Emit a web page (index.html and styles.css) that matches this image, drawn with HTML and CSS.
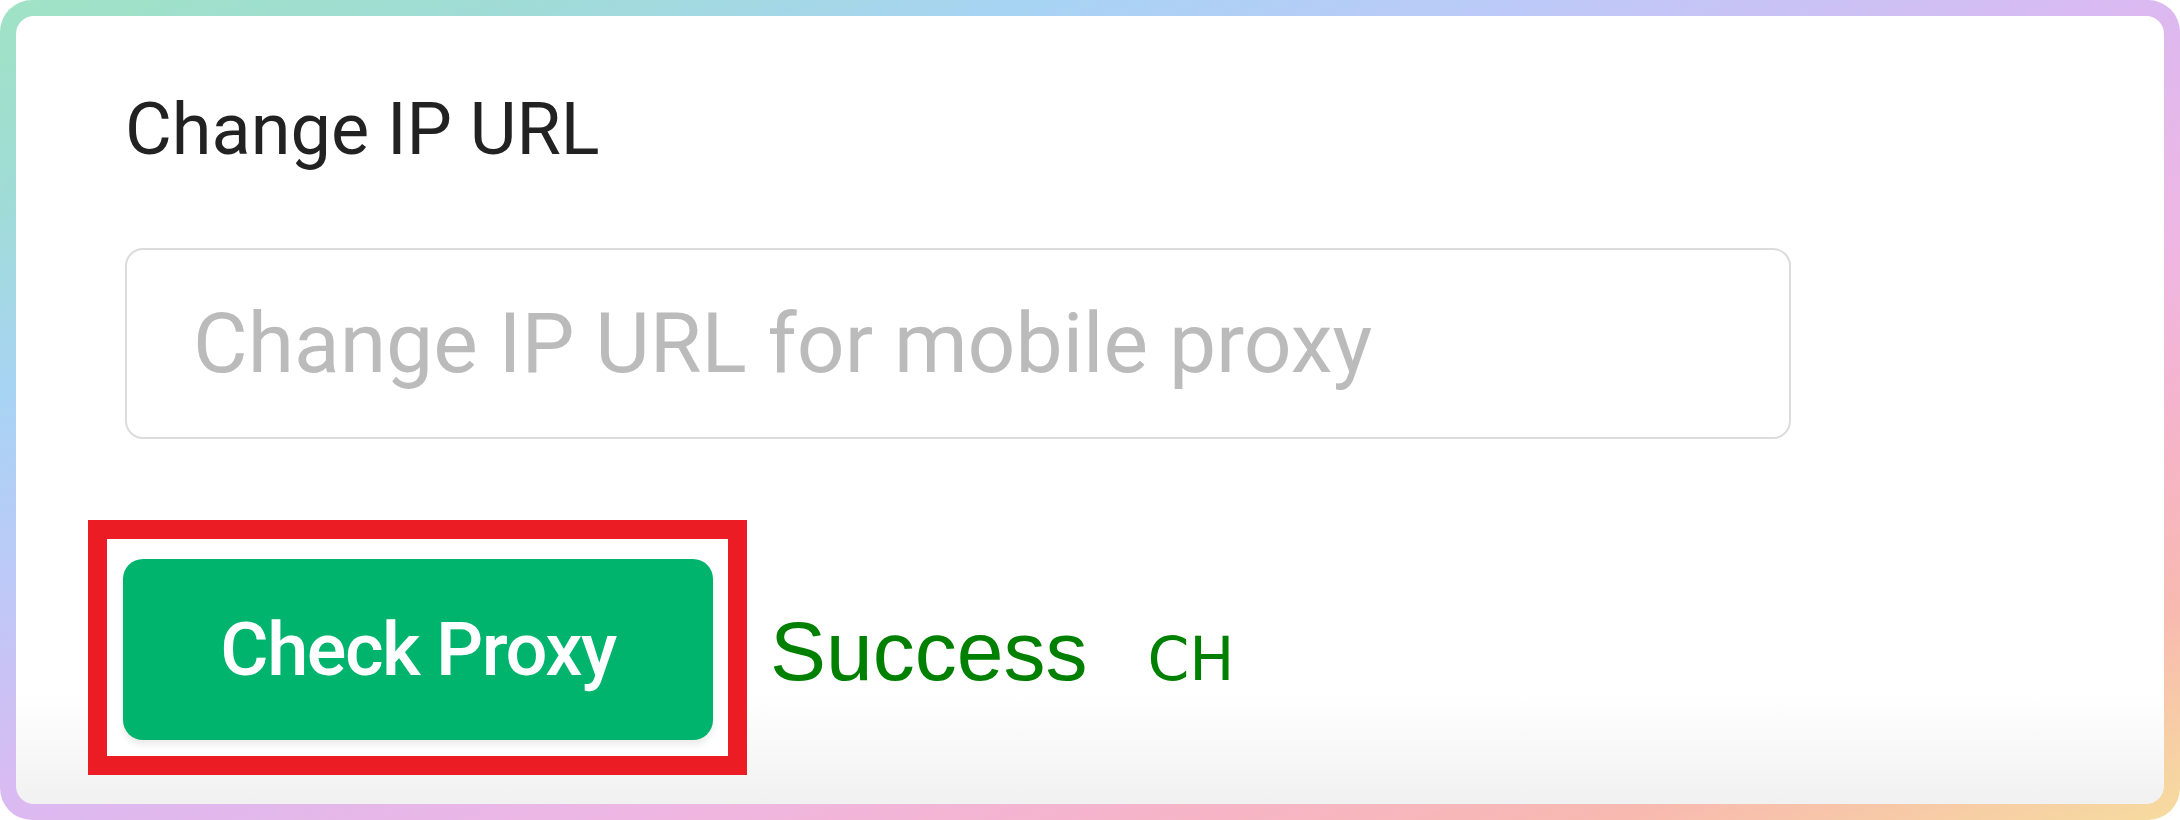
FILE: index.html
```html
<!DOCTYPE html>
<html lang="en">
<head>
    <meta charset="UTF-8">
    <meta name="viewport" content="width=device-width, initial-scale=1.0">
    <title>Proxy Settings</title>
    <link rel="stylesheet" href="styles.css">
</head>
<body>

    <!-- Gradient frame -->
    <div class="frame">
        <div class="card">

            <!-- Change IP field -->
            <label class="field-label" for="changeIp">Change IP URL</label>
            <input class="field-input" id="changeIp" type="text" placeholder="Change IP URL for mobile proxy">

            <!-- Check button + result -->
            <div class="actions">
                <div class="highlight">
                    <button class="check-btn" type="button">Check Proxy</button>
                </div>
                <div class="status">
                    <span class="status-text">Success</span>
                    <span class="status-country">CH</span>
                </div>
            </div>

        </div>
    </div>

</body>
</html>
```

FILE: styles.css
```css
/* General Styles */
body {
    margin: 0;
    padding: 0;
    background-color: #fff;
    font-family: Roboto, "Liberation Sans", Arial, sans-serif;
}

/* Frame Styles */
.frame {
    height: 820px;
    box-sizing: border-box;
    padding: 16px;
    border-radius: 32px;
    background: linear-gradient(to bottom right,
        #a0e3c5 0%,
        #a0dcd6 12%,
        #a8d4f4 24%,
        #bccaf8 35%,
        #dcb9f1 50%,
        #efb6e2 65%,
        #f6b4cc 75%,
        #f8b9b0 87%,
        #f6dc9e 100%);
}

.card {
    height: 100%;
    box-sizing: border-box;
    border-radius: 18px;
    background: linear-gradient(#fff 86%, #f1f1f1 100%);
    padding: 72px 0 0 109px;
    display: flex;
    flex-direction: column;
    align-items: flex-start;
}

/* Field Styling */
.field-label {
    font-size: 72px;
    line-height: 84px;
    color: #222;
}

.field-input {
    margin-top: 76px;
    width: 1666px;
    height: 191px;
    box-sizing: border-box;
    border: 2px solid #dcdcdc;
    border-radius: 18px;
    padding: 0 0 0 66px;
    font-family: Roboto, Arial, sans-serif;
    font-size: 84px;
    color: #333;
    background-color: #fff;
    outline: none;
}

.field-input::placeholder {
    color: #bbb;
}

/* Actions Styling */
.actions {
    margin-top: 81px;
    margin-left: -37px;
    display: flex;
    align-items: center;
}

.highlight {
    border: 19px solid #ec1c24;
    padding: 20px 15px 16px 16px;
    background-color: #fff;
}

.check-btn {
    display: block;
    width: 590px;
    height: 181px;
    border: none;
    border-radius: 20px;
    background-color: #00b46e;
    color: #fff;
    font-family: Roboto, Arial, sans-serif;
    font-weight: 500;
    font-size: 74px;
    letter-spacing: -1.5px;
    box-shadow: 0 5px 6px rgba(0, 0, 0, 0.08);
    cursor: pointer;
}

/* Status Styling */
.status {
    margin: 7px 0 0 23px;
    display: flex;
    align-items: baseline;
    gap: 60px;
    color: #008000;
}

.status-text {
    font-family: "Liberation Sans", Arial, sans-serif;
    font-size: 84px;
}

.status-country {
    font-family: "DejaVu Sans", Verdana, sans-serif;
    font-size: 60px;
}
```
